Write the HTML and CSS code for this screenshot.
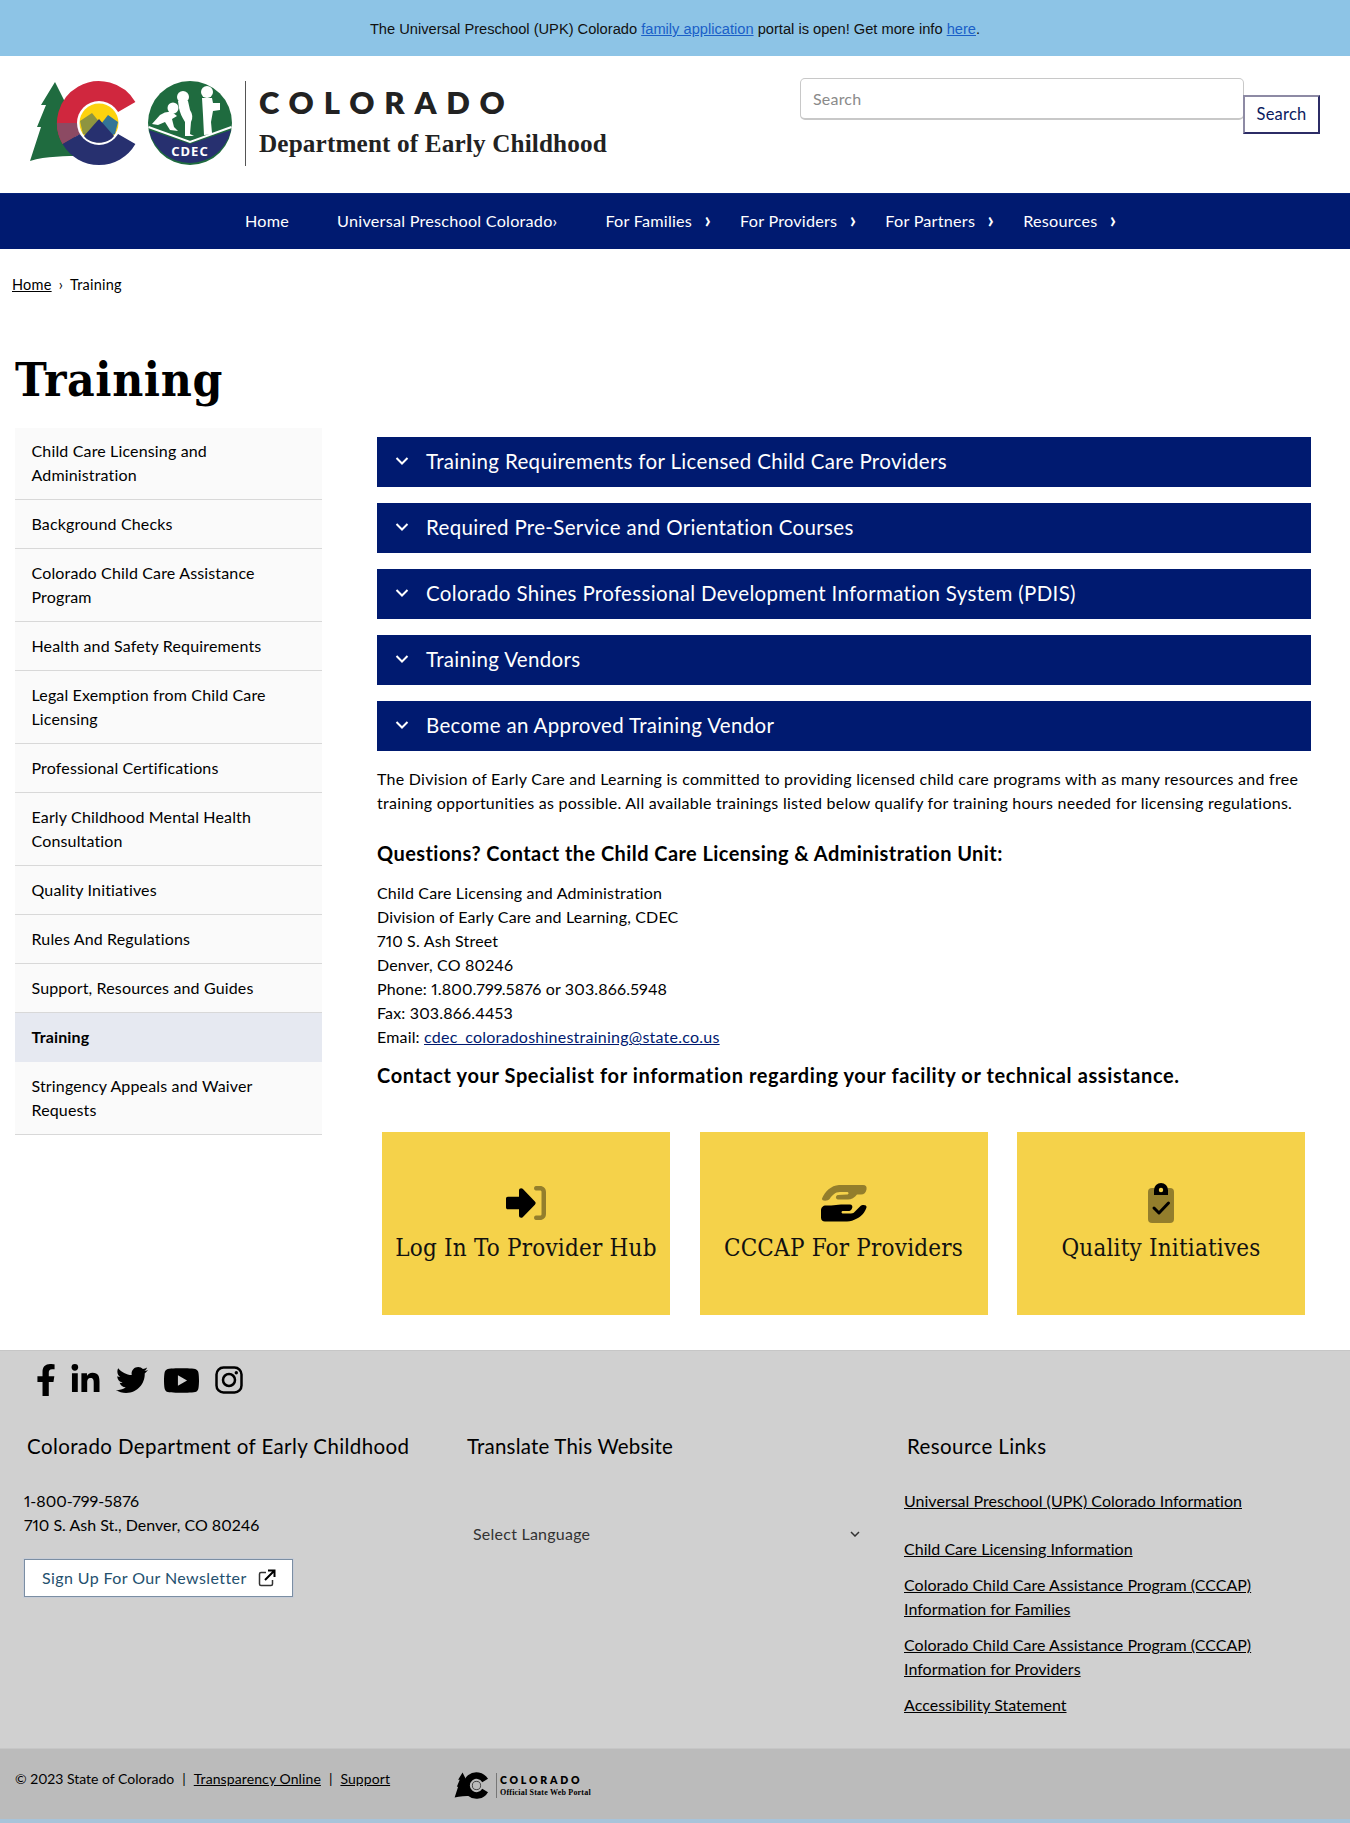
FILE: index.html
```html
<!DOCTYPE html>
<html lang="en">
<head>
<meta charset="utf-8">
<title>Training | Colorado Department of Early Childhood</title>
<link rel="stylesheet" href="styles.css">
</head>
<body>
<div class="banner">The Universal Preschool (UPK) Colorado <a href="#">family application</a> portal is open! Get more info <a href="#">here</a>.</div>
<header class="site-header">
  <a class="brand" href="#">
    <svg class="brand-mark" viewBox="28 80 220 86" aria-hidden="true">
      <path fill="#1f6b3f" d="M55 82 66 104 70 104 74 135 82 156C66 156 46 156 30 161L41 127 37 127 46 105 41 105Z"/>
      <path fill="none" stroke="#d0273e" stroke-width="21" d="M126.3 107.3A31.5 31.5 0 1 0 71.7 138.800"/>
      <path fill="none" stroke="#8c4a63" stroke-width="21" d="M67.500 123A31.500 31.500 0 0 0 71.700 138.800"/>
      <path fill="none" stroke="#27306f" stroke-width="21" d="M71.700 138.800A31.500 31.500 0 0 0 126.300 138.800"/>
      <circle cx="99" cy="123" r="22" fill="#fff"/>
      <circle cx="99" cy="123" r="19.500" fill="#fdd20e"/>
      <path fill="#8e9440" d="M83 134 80 121 92 113 101 124 90 136Z"/>
      <path fill="#347597" d="M101 124 108 115 118 122 115 134 108 137Z"/>
      <path fill="#27306f" d="M84 136 99 119 114 136C108 145 90 145 84 136Z"/>
      <circle cx="190" cy="123" r="42" fill="#1f6b3f"/>
      <path fill="#27306f" d="M149 130 190 144 231 130A42 42 0 0 1 149 130Z"/>
      <path fill="none" stroke="#fff" stroke-width="2" d="M148.500 127 190 142 231.500 127"/>
      <g fill="#fff">
        <circle cx="173" cy="108" r="5.500"/>
        <path d="M152 124 160 115Q166 111 172 112L177 116 172 119 174 127 178 131 170 130 165 122 158 125Z"/>
        <circle cx="183" cy="97" r="6"/>
        <path d="M178 101H188L190 110Q194 116 191 122L190 134 194 136 185 136 185 122Q180 114 179 108Z"/>
        <circle cx="207" cy="92" r="6"/>
        <path d="M202 98H212L213 103H220V110L213 111 211 122 212 133 215 134 204 135 203 115Z"/>
      </g>
      <text class="brand-cdec" x="190" y="156" text-anchor="middle">CDEC</text>
      <rect x="245" y="81" width="1" height="85" fill="#555"/>
    </svg>
    <span class="brand-text">
      <span class="brand-state">COLORADO</span>
      <span class="brand-dept">Department of Early Childhood</span>
    </span>
  </a>
  <form class="search">
    <input class="search-input" type="text" placeholder="Search">
    <button class="search-button" type="button">Search</button>
  </form>
</header>
<nav class="main-nav">
  <a href="#">Home</a>
  <a href="#">Universal Preschool Colorado›</a>
  <a class="has-arrow" href="#">For Families</a>
  <a class="has-arrow" href="#">For Providers</a>
  <a class="has-arrow" href="#">For Partners</a>
  <a class="has-arrow" href="#">Resources</a>
</nav>
<div class="breadcrumb"><a href="#">Home</a><span class="crumb-sep">›</span>Training</div>
<h1 class="page-title">Training</h1>
<div class="content">
  <aside class="side-nav">
    <a href="#">Child Care Licensing and Administration</a>
    <a href="#">Background Checks</a>
    <a href="#">Colorado Child Care Assistance Program</a>
    <a href="#">Health and Safety Requirements</a>
    <a href="#">Legal Exemption from Child Care Licensing</a>
    <a href="#">Professional Certifications</a>
    <a href="#">Early Childhood Mental Health Consultation</a>
    <a href="#">Quality Initiatives</a>
    <a href="#">Rules And Regulations</a>
    <a href="#">Support, Resources and Guides</a>
    <a class="active" href="#">Training</a>
    <a href="#">Stringency Appeals and Waiver Requests</a>
  </aside>
  <main class="main">
    <div class="accordion">
      <div class="acc-bar"><svg class="acc-chevron" viewBox="0 0 14 10"><path d="M1.500 2 7 7.500 12.500 2"/></svg>Training Requirements for Licensed Child Care Providers</div>
      <div class="acc-bar"><svg class="acc-chevron" viewBox="0 0 14 10"><path d="M1.500 2 7 7.500 12.500 2"/></svg>Required Pre-Service and Orientation Courses</div>
      <div class="acc-bar"><svg class="acc-chevron" viewBox="0 0 14 10"><path d="M1.500 2 7 7.500 12.500 2"/></svg>Colorado Shines Professional Development Information System (PDIS)</div>
      <div class="acc-bar"><svg class="acc-chevron" viewBox="0 0 14 10"><path d="M1.500 2 7 7.500 12.500 2"/></svg>Training Vendors</div>
      <div class="acc-bar"><svg class="acc-chevron" viewBox="0 0 14 10"><path d="M1.500 2 7 7.500 12.500 2"/></svg>Become an Approved Training Vendor</div>
    </div>
    <p class="intro">The Division of Early Care and Learning is committed to providing licensed child care programs with as many resources and free training opportunities as possible. All available trainings listed below qualify for training hours needed for licensing regulations.</p>
    <h2 class="contact-heading">Questions? Contact the Child Care Licensing &amp; Administration Unit:</h2>
    <p class="address">Child Care Licensing and Administration<br>Division of Early Care and Learning, CDEC<br>710 S. Ash Street<br>Denver, CO 80246<br>Phone: 1.800.799.5876 or 303.866.5948<br>Fax: 303.866.4453<br>Email: <a href="#">cdec_coloradoshinestraining@state.co.us</a></p>
    <h2 class="specialist">Contact your Specialist for information regarding your facility or technical assistance.</h2>
    <div class="cards">
      <a class="card" href="#">
        <svg class="card-icon" viewBox="0 0 40 40" aria-hidden="true">
          <path class="duo" d="M30 3h4c3.500 0 6 2.500 6 6v22c0 3.500-2.500 6-6 6h-4c-2.600 0-2.600-4.500 0-4.500h4c1 0 1.500-.5 1.500-1.500V9c0-1-.5-1.500-1.500-1.500h-4C27.400 7.500 27.400 3 30 3Z"/>
          <path d="M0 15.500c0-1 .8-1.800 1.800-1.800H13V7.400c0-2 2.300-3 3.700-1.600l12.200 12.600c1 1 1 2.400 0 3.300L16.700 34.200C15.300 35.600 13 34.600 13 32.600v-6.300H1.800c-1 0-1.800-.8-1.800-1.800Z"/>
        </svg>
        Log In To Provider Hub
      </a>
      <a class="card" href="#">
        <svg class="card-icon" viewBox="0 0 46 37" aria-hidden="true">
          <path class="duo" d="M1 14C4 7 10 1 18 .5H42C45 .5 46 2 45.500 5 45 8 43 10 40 10H36C34 13 30 15 27 15H17C14.500 15 14 11 17 10.500L26 10C28 10 28 7.500 26 7.500H19C14 7.500 11 11 9 14 7 17 .5 17 1 14Z"/>
          <path d="M0 26C0 23 2 21 5 21H10C14 21 16 20 20 20H29C31 20 32 22 31 24 30 26 29 26.500 27 26.500H22C20 26.500 20 29 22 29H30C32 29 33 28 34 27L39 22C41 20 46 20 45.500 23 44 28 40 32 36 34 32 36 30 37 26 37H4C1.500 37 0 35.500 0 33Z"/>
        </svg>
        CCCAP For Providers
      </a>
      <a class="card" href="#">
        <svg class="card-icon" viewBox="0 0 40 40" aria-hidden="true">
          <rect class="duo" x="7" y="5" width="26" height="35" rx="4"/>
          <path d="M13 12V7a7 7 0 0 1 14 0v5Z"/>
          <circle cx="20" cy="7" r="2.200" fill="#f5d24a"/>
          <path fill="none" stroke="#000" stroke-width="3" stroke-linecap="round" stroke-linejoin="round" d="M13 25l5 5 9.500-10"/>
        </svg>
        Quality Initiatives
      </a>
    </div>
  </main>
</div>
<footer class="footer">
  <div class="socials">
    <svg class="s-fb" viewBox="0 0 320 512"><path d="M279.140 288l14.220-92.660h-88.910v-60.130c0-25.350 12.420-50.060 52.240-50.060h40.420V6.260S260.430 0 225.360 0c-73.220 0-121.080 44.380-121.080 124.720v70.620H22.890V288h81.390v224h100.170V288z"/></svg>
    <svg class="s-in" viewBox="0 0 448 512"><path d="M100.280 448H7.400V148.900h92.880zM53.790 108.100C24.090 108.100 0 83.500 0 53.800a53.790 53.790 0 0 1 107.580 0c0 29.700-24.100 54.300-53.790 54.300zM447.900 448h-92.680V302.400c0-34.700-.7-79.200-48.290-79.200-48.290 0-55.690 37.700-55.690 76.700V448h-92.780V148.900h89.080v40.800h1.300c12.400-23.500 42.690-48.300 87.880-48.300 94 0 111.280 61.900 111.280 142.300V448z"/></svg>
    <svg class="s-tw" viewBox="0 0 512 512"><path d="M459.370 151.716c.325 4.548.325 9.097.325 13.645 0 138.720-105.583 298.558-298.558 298.558-59.452 0-114.680-17.219-161.137-47.106 8.447.974 16.568 1.299 25.340 1.299 49.055 0 94.213-16.568 130.274-44.832-46.132-.975-84.792-31.188-98.112-72.772 6.498.974 12.995 1.624 19.818 1.624 9.421 0 18.843-1.300 27.614-3.573-48.081-9.747-84.143-51.980-84.143-102.985v-1.299c13.969 7.797 30.214 12.670 47.431 13.319-28.264-18.843-46.781-51.005-46.781-87.391 0-19.492 5.197-37.360 14.294-52.954 51.655 63.675 129.300 105.258 216.365 109.807-1.624-7.797-2.599-15.918-2.599-24.040 0-57.828 46.782-104.934 104.934-104.934 30.213 0 57.502 12.670 76.670 33.137 23.715-4.548 46.456-13.320 66.599-25.340-7.798 24.366-24.366 44.833-46.132 57.827 21.117-2.273 41.584-8.122 60.426-16.243-14.292 20.791-32.161 39.308-52.628 54.253z"/></svg>
    <svg class="s-yt" viewBox="15 64 546 384"><path d="M549.655 124.083c-6.281-23.650-24.787-42.276-48.284-48.597C458.781 64 288 64 288 64S117.220 64 74.629 75.486c-23.497 6.322-42.003 24.947-48.284 48.597-11.412 42.867-11.412 132.305-11.412 132.305s0 89.438 11.412 132.305c6.281 23.650 24.787 41.500 48.284 47.821C117.220 448 288 448 288 448s170.780 0 213.371-11.486c23.497-6.321 42.003-24.171 48.284-47.821 11.412-42.867 11.412-132.305 11.412-132.305s0-89.438-11.412-132.305zm-317.510 213.508V175.185l142.739 81.205-142.739 81.201z"/></svg>
    <svg class="s-ig" viewBox="0 0 28 28"><rect x="1.500" y="1.500" width="25" height="25" rx="7" fill="none" stroke="#000" stroke-width="2.500"/><circle cx="14" cy="14" r="6" fill="none" stroke="#000" stroke-width="2.500"/><circle cx="21.300" cy="6.700" r="1.700"/></svg>
  </div>
  <div class="footer-cols">
    <section class="col">
      <h3 class="col-title">Colorado Department of Early Childhood</h3>
      <p class="col-text">1-800-799-5876<br>710 S. Ash St., Denver, CO 80246</p>
      <a class="newsletter" href="#">Sign Up For Our Newsletter
        <svg class="ext-icon" viewBox="0 0 18 18" aria-hidden="true"><path fill="none" stroke="#333" stroke-width="1.500" d="M8 3.500H3A1.500 1.500 0 0 0 1.500 5v10A1.500 1.500 0 0 0 3 16.500h10a1.500 1.500 0 0 0 1.500-1.500v-4"/><path fill="none" stroke="#000" stroke-width="2" d="M7 11 16 2M10 1.500h6.500V8"/></svg>
      </a>
    </section>
    <section class="col">
      <h3 class="col-title col-title-tight">Translate This Website</h3>
      <div class="select-lang">Select Language<svg class="select-chevron" viewBox="0 0 10 6"><path d="M1 1l4 4 4-4"/></svg></div>
    </section>
    <section class="col col-links">
      <h3 class="col-title">Resource Links</h3>
      <a class="first" href="#">Universal Preschool (UPK) Colorado Information</a>
      <a href="#">Child Care Licensing Information</a>
      <a href="#">Colorado Child Care Assistance Program (CCCAP) Information for Families</a>
      <a href="#">Colorado Child Care Assistance Program (CCCAP) Information for Providers</a>
      <a href="#">Accessibility Statement</a>
    </section>
  </div>
</footer>
<div class="legal">
  <div class="legal-text">© 2023 State of Colorado<span class="pipe">|</span><a href="#">Transparency Online</a><span class="pipe">|</span><a href="#">Support</a></div>
  <div class="state-logo">
    <svg class="state-mark" viewBox="28 80 120 86" aria-hidden="true">
      <path d="M55 82 66 104 70 104 74 135 82 156C66 156 46 156 30 161L41 127 37 127 46 105 41 105Z"/>
      <path fill="none" stroke="#000" stroke-width="21" d="M126.300 107.300A31.500 31.500 0 1 0 126.300 138.800"/>
      <circle cx="99" cy="123" r="13" fill="none" stroke="#000" stroke-width="2"/>
    </svg>
    <div class="state-text"><span class="state-name">COLORADO</span><span class="state-sub">Official State Web Portal</span></div>
  </div>
</div>
<div class="bottom-strip"></div>
</body>
</html>
```
FILE: styles.css
```css
* { box-sizing: border-box; }
html, body { margin: 0; padding: 0; }
body { font-family: "Lato", "Noto Sans", sans-serif; font-size: 16px; line-height: 24px; color: #000; background: #fff; letter-spacing: .24px; font-feature-settings: "pnum"; }
a { color: inherit; }

.banner { height: 56px; background: #8dc4e6; text-align: center; font: 14.670px/58px "Liberation Sans", Arial, sans-serif; letter-spacing: 0; color: #111; }
.banner a { color: #1a5fc8; }

.site-header { height: 137px; display: flex; justify-content: space-between; align-items: flex-start; }
.brand { display: flex; margin: 24px 0 0 28px; text-decoration: none; color: #222; }
.brand-mark { width: 220px; height: 86px; display: block; }
.brand-cdec { font: 700 13px "Noto Sans", sans-serif; fill: #fff; letter-spacing: 1px; }
.brand-text { display: flex; flex-direction: column; margin-left: 11px; }
.brand-state { font: 800 31px/36px "Lato", sans-serif; letter-spacing: 9.800px; margin-top: 4px; color: #222; }
.brand-dept { font: 700 25.200px/30px "Liberation Serif", serif; letter-spacing: .15px; margin-top: 9px; color: #222; }

.search { display: flex; align-items: flex-start; margin: 22px 30px 0 0; }
.search-input { width: 444px; height: 42px; border: 1px solid #c8c8c8; border-bottom-width: 2px; border-radius: 5px; padding: 0 12px; font: 16px "Lato", sans-serif; letter-spacing: .2px; background: #fff; }
.search-input::placeholder { color: #8a8a8a; }
.search-button { width: 77px; height: 39px; margin: 17px 0 0 -1px; border: 2px solid #2c2c66; border-top-color: #8d8aa4; border-left-color: #8d8aa4; background: #fff; color: #0a1a60; font: 16.500px/33px "Lato", sans-serif; letter-spacing: .2px; padding: 0; }

.main-nav { height: 56px; background: #001a70; display: flex; padding: 0 0 2px 221px; align-items: center; border-top: 1px solid #06237a; font-size: 16.200px; }
.main-nav a { color: #fff; text-decoration: none; padding: 0 24px; position: relative; }
.main-nav a.has-arrow::after { content: "›"; position: absolute; right: 5px; top: -1px; font-size: 22px; font-weight: 700; }

.breadcrumb { font-size: 14.500px; padding: 24px 12px 0; height: 52px; line-height: 24px; }
.crumb-sep { margin: 0 7px; }

.page-title { font: 700 47.500px/56px "DejaVu Serif Condensed", "DejaVu Serif", serif; letter-spacing: .6px; margin: 0; padding: 50px 15px 0; height: 127px; }

.content { display: flex; align-items: flex-start; padding-left: 15px; }
.side-nav { width: 307px; flex: none; display: flex; flex-direction: column; letter-spacing: .15px; }
.side-nav a { padding: 12px 16.500px; background: #fafafa; border-bottom: 1px solid #d8d8d8; text-decoration: none; font-size: 16px; }
.side-nav a:first-child { padding-top: 11px; }
.side-nav a.active { background: #e6e9f1; font-weight: 700; border-bottom-color: #e6e9f1; }

.main { width: 934px; margin-left: 55px; padding-top: 9px; }
.accordion { display: flex; flex-direction: column; gap: 16px; }
.acc-bar { height: 50px; background: #001a70; color: #fff; font-size: 20.500px; display: flex; align-items: center; padding: 0 0 2px 18px; letter-spacing: .33px; }
.acc-chevron { width: 14px; height: 10px; margin-right: 17px; fill: none; stroke: #fff; stroke-width: 2; }
.intro { margin: 16px 0 0; letter-spacing: .26px; }
.contact-heading { font-size: 20px; line-height: 26px; margin: 25px 0 0; font-weight: 700; letter-spacing: .43px; }
.address { margin: 15px 0 0; letter-spacing: .17px; }
.address a { color: #001a70; letter-spacing: .24px; }
.specialist { font-size: 20px; line-height: 26px; margin: 13px 0 0; font-weight: 700; letter-spacing: .61px; }
.cards { display: flex; gap: 29.500px; padding: 44px 5px 0; }
.card { width: 288px; height: 183px; background: #f5d24a; display: flex; flex-direction: column; align-items: center; justify-content: center; font: 24px/32px "DejaVu Serif Condensed", "DejaVu Serif", serif; letter-spacing: .2px; text-decoration: none; color: #111; padding-bottom: 0; }
.card-icon { height: 40px; width: 46px; margin-bottom: 9px; }
.duo { opacity: .4; }

.footer { margin-top: 35px; background: #d0d0d0; height: 398px; padding-top: 11px; border-top: 1px solid #c6c6c6; }
.socials { display: flex; align-items: center; height: 36px; padding-left: 36px; }
.socials svg { height: 32px; display: block; }
.s-fb { width: 20px; margin-right: 14px; }
.s-in { width: 31px; height: 30px; margin-right: 15px; }
.s-tw { width: 32px; margin-right: 16px; }
.socials .s-yt { width: 35px; height: 25px; margin-right: 16px; }
.socials .s-ig { width: 28px; height: 28px; }
.footer-cols { display: grid; grid-template-columns: 440px 440px 1fr; padding-left: 24px; margin-top: 33px; }
.col-title { font-size: 20.500px; line-height: 30px; font-weight: 400; margin: 0; padding-left: 3px; letter-spacing: .4px; }
.col-title-tight { letter-spacing: .2px; }
.col-text { margin: 28px 0 0; letter-spacing: 0; }
.newsletter { display: flex; align-items: center; justify-content: space-between; width: 269px; height: 38px; margin-top: 22px; background: #fff; border: 1px solid #7b8ea3; box-shadow: 0 0 0 1px #c7ccd6; padding: 0 16px 0 17px; text-decoration: none; color: #24506e; letter-spacing: .4px; }
.ext-icon { width: 18px; height: 18px; }
.select-lang { display: flex; justify-content: space-between; align-items: center; margin-top: 61px; padding: 0 0 0 9px; width: 396px; color: #333; }
.select-chevron { width: 10px; height: 6px; fill: none; stroke: #333; stroke-width: 1.500; }
.col-links { display: flex; flex-direction: column; align-items: flex-start; letter-spacing: .02px; }
.col-links .col-title { margin-bottom: 28px; }
.col-links a { width: 372px; margin-bottom: 12px; }
.col-links a.first { margin-bottom: 24px; }

.legal { height: 71px; background: #bbb; display: flex; align-items: flex-start; border-top: 1px solid #c6c6c6; padding-left: 15px; }
.legal-text { font-size: 14px; line-height: 24px; margin-top: 18px; width: 439px; letter-spacing: 0; }
.legal-text a { letter-spacing: .1px; }
.pipe { margin: 0 8px; }
.state-logo { display: flex; align-items: center; margin-top: 22px; }
.state-mark { width: 38px; height: 29px; display: block; }
.state-text { display: flex; flex-direction: column; border-left: 1px solid #777; margin-left: 4px; padding-left: 3px; }
.state-name { font: 800 10.500px/14px "Lato", sans-serif; letter-spacing: 2.800px; }
.state-sub { font: 700 8px/11px "Liberation Serif", serif; letter-spacing: .2px; }
.bottom-strip { height: 5px; background: #a8c4da; }
```
